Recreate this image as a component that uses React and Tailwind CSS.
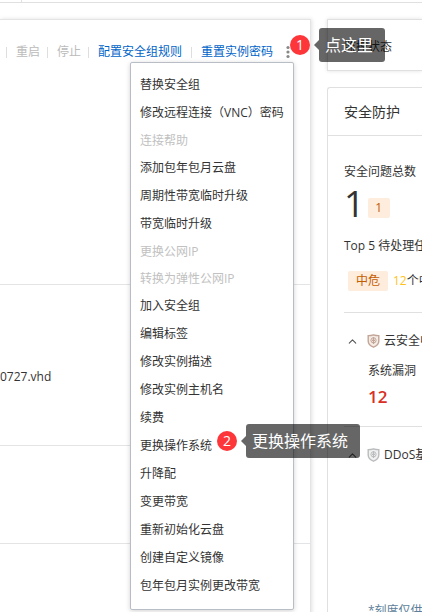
import React from "react";
import { ChevronUp } from "lucide-react";

const menuItems = [
  { label: "替换安全组" },
  { label: "修改远程连接（VNC）密码" },
  { label: "连接帮助", disabled: true },
  { label: "添加包年包月云盘" },
  { label: "周期性带宽临时升级" },
  { label: "带宽临时升级" },
  { label: "更换公网IP", disabled: true },
  { label: "转换为弹性公网IP", disabled: true },
  { label: "加入安全组" },
  { label: "编辑标签" },
  { label: "修改实例描述" },
  { label: "修改实例主机名" },
  { label: "续费" },
  { label: "更换操作系统", step: 2 },
  { label: "升降配" },
  { label: "变更带宽" },
  { label: "重新初始化云盘" },
  { label: "创建自定义镜像" },
  { label: "包年包月实例更改带宽" },
];

const StepHint = ({ step, text }) => (
  <div className="flex items-center whitespace-nowrap pointer-events-none">
    <span className="w-5 h-5 shrink-0 rounded-full bg-[#fd3639] text-white text-[14px] leading-5 text-center">
      {step}
    </span>
    <svg width="5" height="10" viewBox="0 0 5 10" className="ml-1 shrink-0">
      <path d="M5 0V10L0 5Z" fill="#000" fillOpacity="0.6" />
    </svg>
    <span className="h-[34px] pl-[6px] pr-3 rounded-[3px] bg-black/60 text-white text-[16px] leading-[34px]">
      {text}
    </span>
  </div>
);

const Separator = () => <span className="w-px h-[11px] bg-[#dedede]" />;

const Shield = ({ color, fill }) => (
  <svg width="13" height="14" viewBox="0 0 13 14" className="ml-2 mr-1 shrink-0">
    <path
      d="M1.2 1.6C3 1.6 5 1.3 6.5 0.8C8 1.3 10 1.6 11.8 1.6V7C11.8 10 9.6 12 6.5 13.2C3.4 12 1.2 10 1.2 7Z"
      fill={fill}
      stroke={color}
      strokeWidth="1.4"
    />
    <circle cx="6.5" cy="6.3" r="2.6" fill="none" stroke={color} strokeWidth="1" />
    <path d="M6.5 3V10M5 6.3H8" stroke={color} strokeWidth="1.2" />
  </svg>
);

const RowChevron = () => (
  <ChevronUp size={13} strokeWidth={2} color="#555" className="shrink-0" />
);

const ActionMenu = () => (
  <ul className="absolute z-10 -right-[2px] top-5 w-[164px] pt-[8px] pb-[9px] bg-white border border-[#b9bec6] rounded-[2px] shadow-[0_1px_5px_rgba(0,0,0,0.18)]">
    {menuItems.map((item) => (
      <li key={item.label} className="relative">
        <button
          disabled={item.disabled}
          className={`block w-full pl-[9px] text-left whitespace-nowrap ${
            item.disabled
              ? "h-[27px] leading-[27px] text-[#c1c1c1]"
              : "h-7 leading-7 text-[#333]"
          }`}
        >
          {item.label}
        </button>
        {item.step && (
          <div className="absolute left-[86px] -top-2">
            <StepHint step={item.step} text={item.label} />
          </div>
        )}
      </li>
    ))}
  </ul>
);

const InstancePanel = () => (
  <section className="flex-1 min-w-0 border-t border-r border-[#e3e4e6] shadow-[1px_0_4px_rgba(0,0,0,0.12)]">
    <div className="h-[264px] pt-[22px]">
      <div className="flex items-center justify-end h-5 pr-[18px] whitespace-nowrap">
        <Separator />
        <button disabled className="ml-[9px] mr-[7px] text-[#bbb]">重启</button>
        <Separator />
        <button disabled className="ml-[9px] mr-[7px] text-[#bbb]">停止</button>
        <Separator />
        <a href="#rules" className="mx-[9px] text-[#0064c8]">配置安全组规则</a>
        <Separator />
        <a href="#password" className="mx-[9px] text-[#0064c8]">重置实例密码</a>
        <div className="relative ml-[2px] w-2 h-5">
          <button aria-label="更多" className="flex items-center justify-center w-2 h-5">
            <svg width="4" height="14" viewBox="0 0 4 14" fill="#888" className="shrink-0">
              <circle cx="2" cy="2.5" r="1.6" />
              <circle cx="2" cy="7" r="1.6" />
              <circle cx="2" cy="11.5" r="1.6" />
            </svg>
          </button>
          <ActionMenu />
          <div className="absolute z-20 left-[6px] -top-[14px]">
            <StepHint step={1} text="点这里" />
          </div>
        </div>
      </div>
    </div>
    <div className="flex items-center h-[161px] pt-6 border-t border-[#e3e4e6] text-[#333]">
      0727.vhd
    </div>
    <div className="h-[98px] border-t border-[#e3e4e6]" />
    <div className="h-[98px] border-t border-[#e3e4e6]" />
  </section>
);

const SecurityPanel = () => (
  <section className="flex-1 border-t border-l border-[#e0e0e0] rounded-tl-[3px]">
    <h2 className="h-12 pl-4 text-[14px] leading-[48px] border-b border-[#e0e0e0]">安全防护</h2>
    <div className="pl-4">
      <p className="pt-[26px] leading-5">安全问题总数</p>
      <div className="flex items-end h-9">
        <span className="text-[36px] leading-7">1</span>
        <a href="#issues" className="w-[22px] h-5 ml-[3px] rounded-[2px] bg-[#feecdd] text-[#c45c00] leading-5 text-center">
          1
        </a>
      </div>
      <p className="pt-[18px] leading-5">Top 5 待处理任</p>
      <div className="flex items-center pt-[15px] pl-1 leading-5">
        <span className="w-10 shrink-0 mr-[5px] rounded-[2px] bg-[#feecdd] text-[#c45c00] text-center">中危</span>
        <span className="text-[#ffc21a]">12</span>个中
      </div>
      <div className="h-[114px] mt-[21px] pt-[18px] border-t border-[#e0e0e0]">
        <div className="flex items-center h-5 pl-[2px]">
          <RowChevron />
          <Shield color="#c2a596" fill="#f5ece6" />
          云安全中
        </div>
        <p className="pt-[10px] pl-6 leading-5">系统漏洞</p>
        <p className="pl-6 text-[17px] font-semibold leading-8 text-[#d93026]">12</p>
      </div>
      <div className="h-[175px] pt-[18px] border-t border-[#e0e0e0]">
        <div className="flex items-center h-5 pl-[2px]">
          <RowChevron />
          <Shield color="#b9bbbd" fill="#f1f1f1" />
          DDoS基
        </div>
      </div>
      <p className="pl-6 leading-5 text-[#5d7f99]">*刻度仅供</p>
    </div>
  </section>
);

const App = () => {
  return (
    <div className="flex flex-col h-screen overflow-hidden bg-white text-[12px] text-[#333] font-['Open_Sans','Noto_Sans_CJK_SC',sans-serif]">
      <header className="h-[3px] shrink-0 pl-[21px] border-b border-[#e0e0e0]">
        <div className="w-px h-full bg-[#e0e0e0]" />
      </header>
      <main className="flex flex-1 gap-4 pt-4">
        <InstancePanel />
        <aside className="flex flex-col w-[95px] shrink-0 whitespace-nowrap">
          <section className="h-[52px] mb-4 pt-[17px] pl-4 leading-5 border border-r-0 border-[#e0e0e0] shadow-[0_0_4px_rgba(0,0,0,0.12)]">
            监控状态
          </section>
          <SecurityPanel />
        </aside>
      </main>
    </div>
  );
};

export default App;
